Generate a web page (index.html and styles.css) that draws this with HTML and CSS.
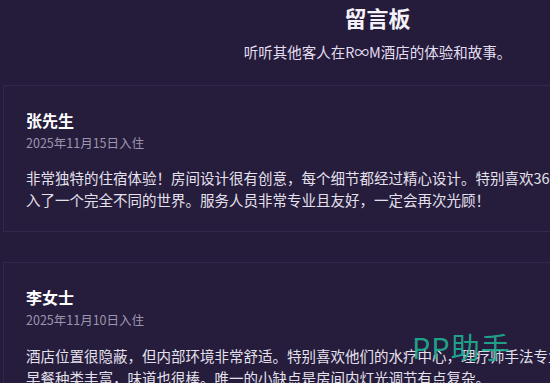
FILE: index.html
```html
<!DOCTYPE html>
<html>
<head>
  <meta charset="utf-8">
  <title>留言板 - R∞M酒店</title>
  <link rel="stylesheet" href="styles.css">
</head>
<body>
  <div class="page">
    <header class="board-head">
      <h1>留言板</h1>
      <p>听听其他客人在R∞M酒店的体验和故事。</p>
    </header>

    <section class="review">
      <h3 class="review-name">张先生</h3>
      <div class="review-date">2025年11月15日入住</div>
      <p class="review-text">非常独特的住宿体验！房间设计很有创意，每个细节都经过精心设计。特别喜欢360度全息投影房间，仿佛进入了一个完全不同的世界。服务人员非常专业且友好，一定会再次光顾！</p>
    </section>

    <section class="review">
      <h3 class="review-name">李女士</h3>
      <div class="review-date">2025年11月10日入住</div>
      <p class="review-text">酒店位置很隐蔽，但内部环境非常舒适。特别喜欢他们的水疗中心，理疗师手法专业，让人身心都彻底放松。早餐种类丰富，味道也很棒。唯一的小缺点是房间内灯光调节有点复杂。</p>
    </section>
  </div>

  <div class="watermark">PP助手</div>
</body>
</html>
```

FILE: styles.css
```css
  html, body {
    overflow: hidden;
  }

  body {
    font-family: "Noto Sans CJK SC", "Noto Sans", sans-serif;
    background-color: #251b3a; /* deep purple */
    margin: 0;
    padding: 0;
    color: #e4e0ec;
  }

  .page {
    width: 749px;
    margin-left: 3px;
  }

  .board-head {
    text-align: center;
    padding-top: 2px;
    margin-bottom: 22px;
  }

  .board-head h1 {
    font-size: 22px;
    font-weight: 600;
    line-height: 1.4;
    color: #f4f1f8;
    margin: 0;
  }

  .board-head p {
    font-size: 14.5px;
    line-height: 1.5;
    color: #e2def0;
    margin: 8px 0 0;
  }

  .review {
    background-color: #261c3c;
    border: 1px solid #32284a;
    padding: 23px 22px 20px;
    margin-bottom: 30px;
  }

  .review-name {
    font-size: 16px;
    font-weight: 700;
    line-height: 1.4;
    color: #ffffff;
    margin: 0;
  }

  .review-date {
    font-size: 12.5px;
    line-height: 1.4;
    color: #9d95ad;
    margin-top: 3px;
  }

  .review-text {
    font-size: 14.5px;
    line-height: 1.5;
    color: #e4e0ec;
    margin: 16px 0 0;
  }

  /* screen recorder overlay */
  .watermark {
    position: absolute;
    left: 412px;
    top: 325px;
    font-size: 29px;
    font-weight: 400;
    letter-spacing: 1px;
    color: rgba(32, 178, 148, 0.9);
  }
```
